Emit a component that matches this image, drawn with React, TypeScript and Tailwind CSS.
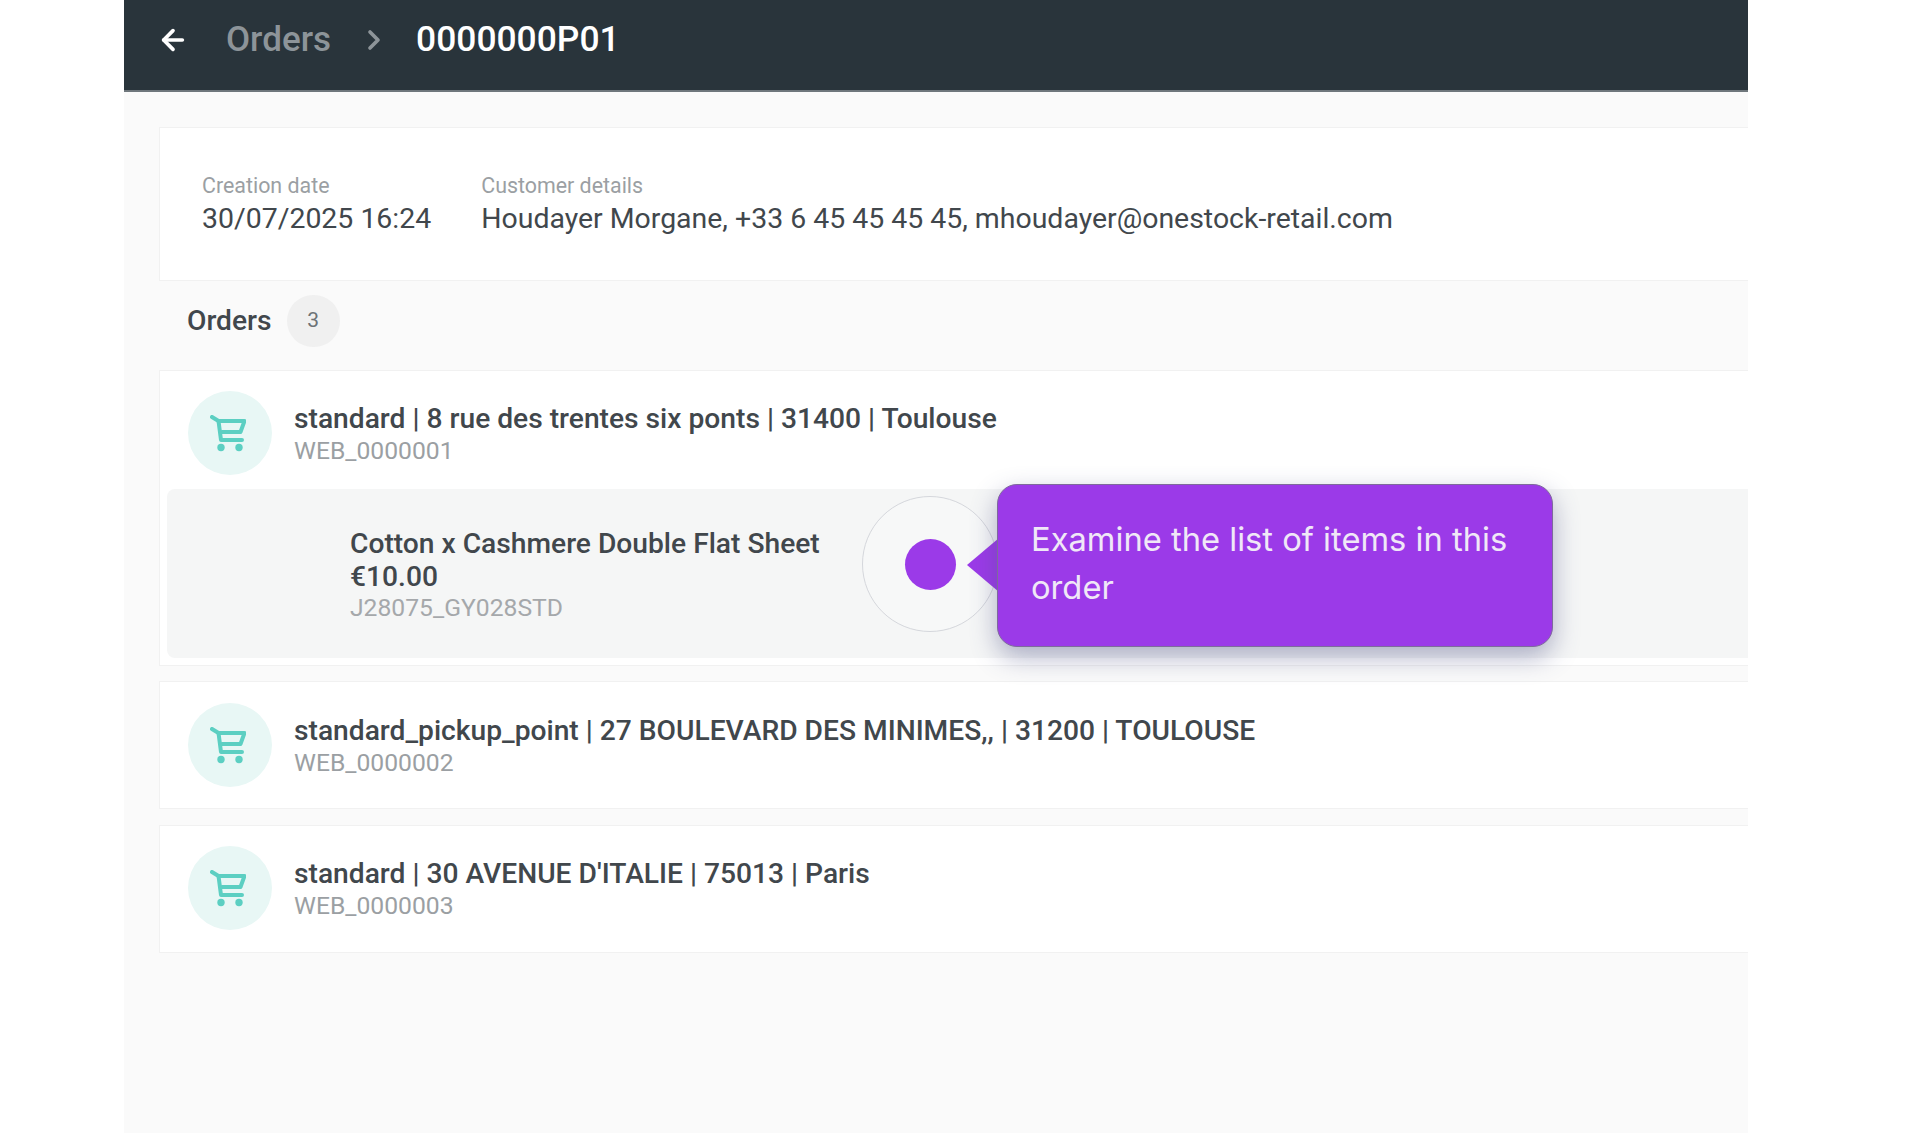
import React from 'react';
import { ArrowLeft, ChevronRight } from 'lucide-react';

const CartIcon = () => (
    <svg className="w-[36px] h-[37px] mr-[5px]" viewBox="0 0 36 37" fill="none" stroke="#5ccfc2" strokeWidth="4" strokeLinecap="round" strokeLinejoin="round">
        <path d="M2 2l6.500 4h26L30.500 17H12" />
        <path d="M8.500 6L11 25h21" />
        <circle cx="11" cy="32.500" r="3.700" fill="#5ccfc2" stroke="none" />
        <circle cx="29" cy="32.500" r="3.700" fill="#5ccfc2" stroke="none" />
    </svg>
);

const OrderHead = ({ title, code }: { title: string; code: string }) => (
    <div className="flex items-center gap-[22px] pl-[28px]">
        <div className="w-[84px] h-[84px] rounded-full bg-[#e8f7f5] flex items-center justify-center shrink-0">
            <CartIcon />
        </div>
        <div className="flex flex-col">
            <p className="text-[28.2px] leading-[36px] font-medium text-[#41474c] whitespace-nowrap">{title}</p>
            <p className="text-[24.7px] leading-[28px] text-[#9b9fa3]">{code}</p>
        </div>
    </div>
);

export default function App() {
    return (
        <div className="min-h-screen bg-white pl-[124px] font-['Roboto',sans-serif]">
            <div className="relative w-[1624px] h-[1133px] bg-[#fafafa] overflow-hidden">
                {/* Top bar */}
                <header className="h-[92px] bg-[#29343b] border-b-2 border-[#6f777c] flex items-center pl-[33px] pb-[10px]">
                    <ArrowLeft className="w-[32px] h-[32px] text-white" strokeWidth={2.75} />
                    <span className="ml-[37px] text-[35px] font-medium text-[#8d9499]">Orders</span>
                    <ChevronRight className="ml-[27px] w-[32px] h-[32px] text-[#8d9499]" strokeWidth={2.75} />
                    <span className="ml-[26px] text-[35.4px] font-medium text-white">0000000P01</span>
                </header>

                <main className="pl-[35px] pt-[35px]">
                    {/* Summary */}
                    <section className="h-[154px] bg-white border border-[#f1f1f1] border-r-0 flex items-center gap-[50px] pl-[42px] pt-[2px]">
                        <div>
                            <p className="text-[21.4px] leading-[28px] text-[#9b9fa3]">Creation date</p>
                            <p className="text-[28.45px] leading-[38px] text-[#41474c]">30/07/2025 16:24</p>
                        </div>
                        <div>
                            <p className="text-[21.4px] leading-[28px] text-[#9b9fa3]">Customer details</p>
                            <p className="text-[28.45px] leading-[38px] text-[#41474c]">Houdayer Morgane, +33 6 45 45 45 45, mhoudayer@onestock-retail.com</p>
                        </div>
                    </section>

                    <div className="flex items-center gap-[15px] pl-[28px] mt-[14px] mb-[23px] h-[52px]">
                        <h2 className="text-[28.2px] font-medium text-[#41474c]">Orders</h2>
                        <span className="w-[53px] h-[52px] rounded-full bg-[#f0f0f0] flex items-center justify-center text-[21px] text-[#6d7276]">3</span>
                    </div>

                    {/* Order cards */}
                    <section className="h-[296px] bg-white border border-[#f1f1f1] border-r-0 pt-[20px]">
                        <OrderHead title="standard | 8 rue des trentes six ponts | 31400 | Toulouse" code="WEB_0000001" />
                        <div className="mt-[14px] ml-[7px] h-[169px] rounded-l-[8px] bg-[#f5f6f6] pl-[183px] pt-[2px] flex flex-col justify-center">
                            <p className="text-[28.2px] leading-[34px] font-medium text-[#41474c]">Cotton x Cashmere Double Flat Sheet</p>
                            <p className="text-[28.2px] leading-[32px] font-medium text-[#41474c]">€10.00</p>
                            <p className="text-[24.7px] leading-[30px] text-[#a5a8ab]">J28075_GY028STD</p>
                        </div>
                    </section>

                    <section className="h-[128px] mt-[15px] bg-white border border-[#f1f1f1] border-r-0 pt-[21px]">
                        <OrderHead title="standard_pickup_point | 27 BOULEVARD DES MINIMES,, | 31200 | TOULOUSE" code="WEB_0000002" />
                    </section>

                    <section className="h-[128px] mt-[16px] bg-white border border-[#f1f1f1] border-r-0 pt-[20px]">
                        <OrderHead title="standard | 30 AVENUE D'ITALIE | 75013 | Paris" code="WEB_0000003" />
                    </section>
                </main>

                {/* Guided tour hotspot and tooltip */}
                <div className="absolute left-[738px] top-[496px] w-[136px] h-[136px] rounded-full border border-[#d5d7dc] bg-[#f7f8f8] flex items-center justify-center">
                    <div className="w-[51px] h-[51px] rounded-full bg-[#9b3ae8]" />
                </div>
                <div className="absolute left-[843px] top-[538px] w-0 h-0 border-y-[27px] border-y-transparent border-r-[32px] border-r-[#9b3ae8]" />
                <div className="absolute left-[873px] top-[484px] w-[556px] h-[163px] rounded-[20px] bg-[#9b3ae8] border border-[#7e6a9c] shadow-[0_10px_26px_rgba(80,85,135,0.45)] pl-[33px] pr-[24px] pt-[30px] font-['Inter',sans-serif] text-[32.7px] leading-[48px] text-[#f0e8f7]">
                    Examine the list of items in this order
                </div>
            </div>
        </div>
    );
}
